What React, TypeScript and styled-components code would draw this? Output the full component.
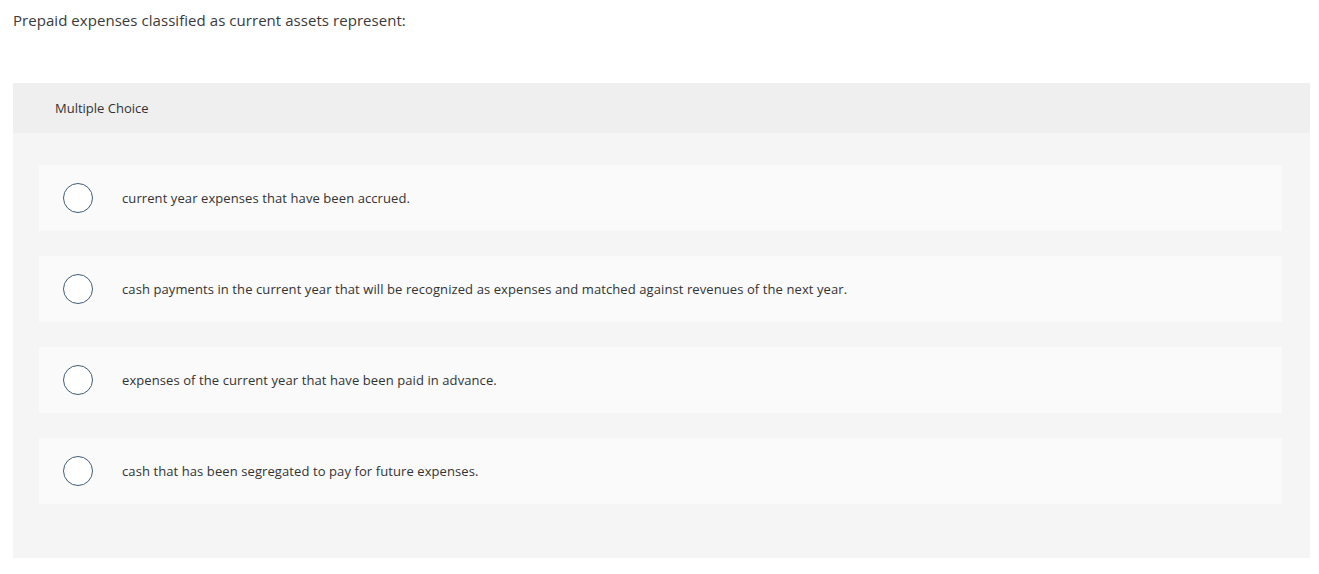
import React from "react";
import styled, { createGlobalStyle } from "styled-components";

const Global = createGlobalStyle`
  html, body { margin: 0; padding: 0; background: #ffffff; }
  body { font-family: "Open Sans", "Liberation Sans", sans-serif; color: #333; }
`;

const Page = styled.div`
  padding: 10px 9px 0 13px;
`;

const Question = styled.p`
  margin: 0;
  font-size: 15px;
  line-height: 20px;
  letter-spacing: 0.05px;
  color: #3a3a3a;
`;

const Panel = styled.section`
  margin-top: 53px;
  background: #f5f5f5;
  width: 1297px;
`;

const Header = styled.div`
  height: 50px;
  background: #efefef;
  display: flex;
  align-items: center;
  padding-left: 42px;
  font-size: 13px;
  color: #333;
`;

const Body = styled.div`
  display: flex;
  flex-direction: column;
  gap: 25px;
  padding: 32px 28px 54px 26px;
`;

const Option = styled.label`
  height: 66px;
  background: #fafafa;
  display: flex;
  align-items: center;
  padding-left: 24px;
  cursor: pointer;
`;

const Radio = styled.span`
  box-sizing: border-box;
  width: 30px;
  height: 30px;
  border: 1.5px solid #3f5d78;
  border-radius: 50%;
  background: #fff;
  flex-shrink: 0;
`;

const OptionText = styled.span`
  margin-left: 29px;
  font-size: 13px;
  letter-spacing: 0.09px;
  color: #333;
`;

const options = [
  "current year expenses that have been accrued.",
  "cash payments in the current year that will be recognized as expenses and matched against revenues of the next year.",
  "expenses of the current year that have been paid in advance.",
  "cash that has been segregated to pay for future expenses.",
];

export default function App() {
  return (
    <Page>
      <Global />
      <Question>Prepaid expenses classified as current assets represent:</Question>
      <Panel>
        <Header>Multiple Choice</Header>
        <Body>
          {options.map((o) => (
            <Option key={o}>
              <Radio />
              <OptionText>{o}</OptionText>
            </Option>
          ))}
        </Body>
      </Panel>
    </Page>
  );
}
